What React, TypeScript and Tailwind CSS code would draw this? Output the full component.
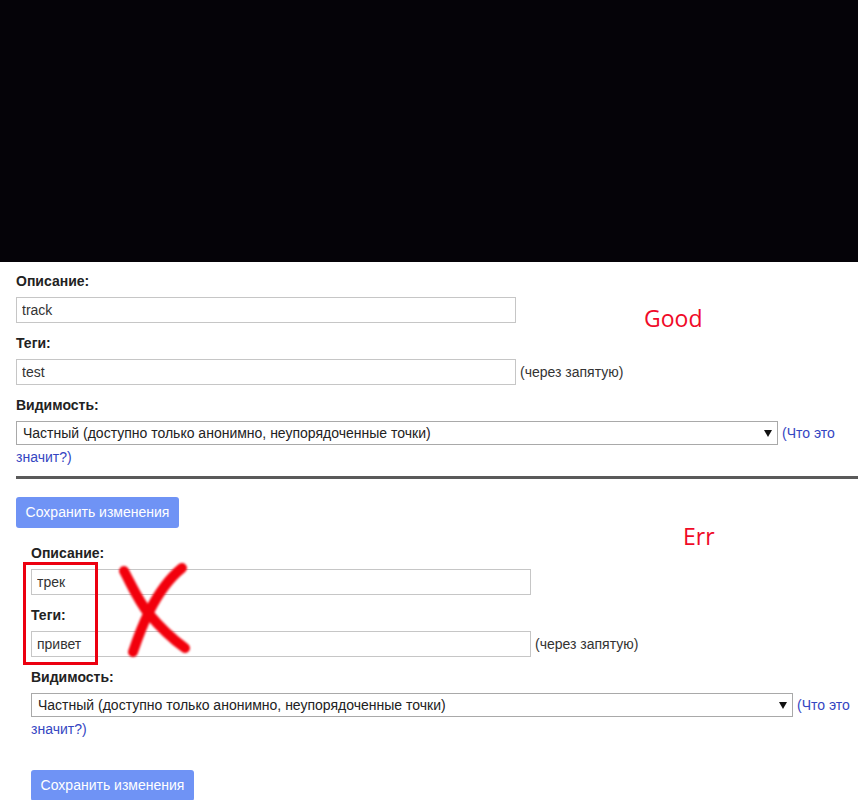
import React from "react";

const font = "font-['Liberation_Sans',Arial,sans-serif]";

function Label({ children }: { children: React.ReactNode }) {
  return <div className="text-[14px] leading-[16px] font-bold text-[#222]">{children}</div>;
}

function TextInput({ value }: { value: string }) {
  return (
    <input
      readOnly
      value={value}
      className={`${font} w-[500px] h-[26px] border border-[#c6c6c6] bg-white pl-[5px] text-[14px] text-[#333] outline-none`}
    />
  );
}

function VisibilitySelect() {
  return (
    <div className="text-[14px] leading-[24px] text-[#333]">
      <div className="flex items-center gap-[4px]">
        <div className="flex items-center justify-between w-[762px] h-[24px] border border-[#a9a9a9] bg-white pl-[6px] pr-[5px] text-[#222]">
          <span>Частный (доступно только анонимно, неупорядоченные точки)</span>
          <svg width="8" height="7" viewBox="0 0 8 7">
            <path d="M0 0h8L4 7z" fill="#111" />
          </svg>
        </div>
        <a className="text-[#3446c2] whitespace-nowrap">(Что это</a>
      </div>
      <a className="block text-[#3446c2]">значит?)</a>
    </div>
  );
}

function SaveButton() {
  return (
    <button className="w-[163px] h-[31px] rounded-[3px] bg-[#6f93f5] text-white text-[14px] flex items-center justify-center">
      Сохранить изменения
    </button>
  );
}

function TrackForm({ desc, tags }: { desc: string; tags: string }) {
  return (
    <div className="flex flex-col">
      <Label>Описание:</Label>
      <div className="mt-[8px]">
        <TextInput value={desc} />
      </div>
      <div className="mt-[12px]">
        <Label>Теги:</Label>
      </div>
      <div className="mt-[8px] flex items-center text-[14px] text-[#333]">
        <TextInput value={tags} />
        <span className="ml-[4px]">(через запятую)</span>
      </div>
      <div className="mt-[12px]">
        <Label>Видимость:</Label>
      </div>
      <div className="mt-[8px]">
        <VisibilitySelect />
      </div>
    </div>
  );
}

export default function App() {
  return (
    <div className={`${font} relative w-[858px] h-[800px] overflow-hidden bg-white`}>
      {/* video area */}
      <div className="h-[262px] bg-[#050308]" />

      {/* good */}
      <div className="pl-[16px] pt-[11px]">
        <TrackForm desc="track" tags="test" />
        <div className="mt-[7px] h-[3px] bg-[#5a5a5a]" />
        <div className="mt-[18px]">
          <SaveButton />
        </div>
      </div>

      {/* err */}
      <div className="pl-[31px] pt-[17px]">
        <TrackForm desc="трек" tags="привет" />
        <div className="mt-[29px]">
          <SaveButton />
        </div>
      </div>

      {/* annotations */}
      <div className="absolute left-[644px] top-[307px] font-['Open_Sans',sans-serif] text-[23px] leading-[23px] text-[#f00a28]">
        Good
      </div>
      <div className="absolute left-[683px] top-[525px] font-['Open_Sans',sans-serif] text-[23px] leading-[23px] text-[#f00a28]">
        Err
      </div>
      <div className="absolute left-[23px] top-[562px] w-[75px] h-[103px] border-[3px] border-[#ec0010]" />
      <svg
        className="absolute left-[115px] top-[558px] blur-[0.8px]"
        width="80"
        height="105"
        viewBox="0 0 80 105"
        fill="none"
      >
        <path d="M9 13 C 18 30, 24 44, 34 56 S 56 80, 70 90" stroke="#f2000c" strokeWidth="10" strokeLinecap="round" />
        <path d="M67 10 C 52 22, 42 38, 34 54 S 22 82, 18 94" stroke="#f2000c" strokeWidth="10" strokeLinecap="round" />
      </svg>
    </div>
  );
}
